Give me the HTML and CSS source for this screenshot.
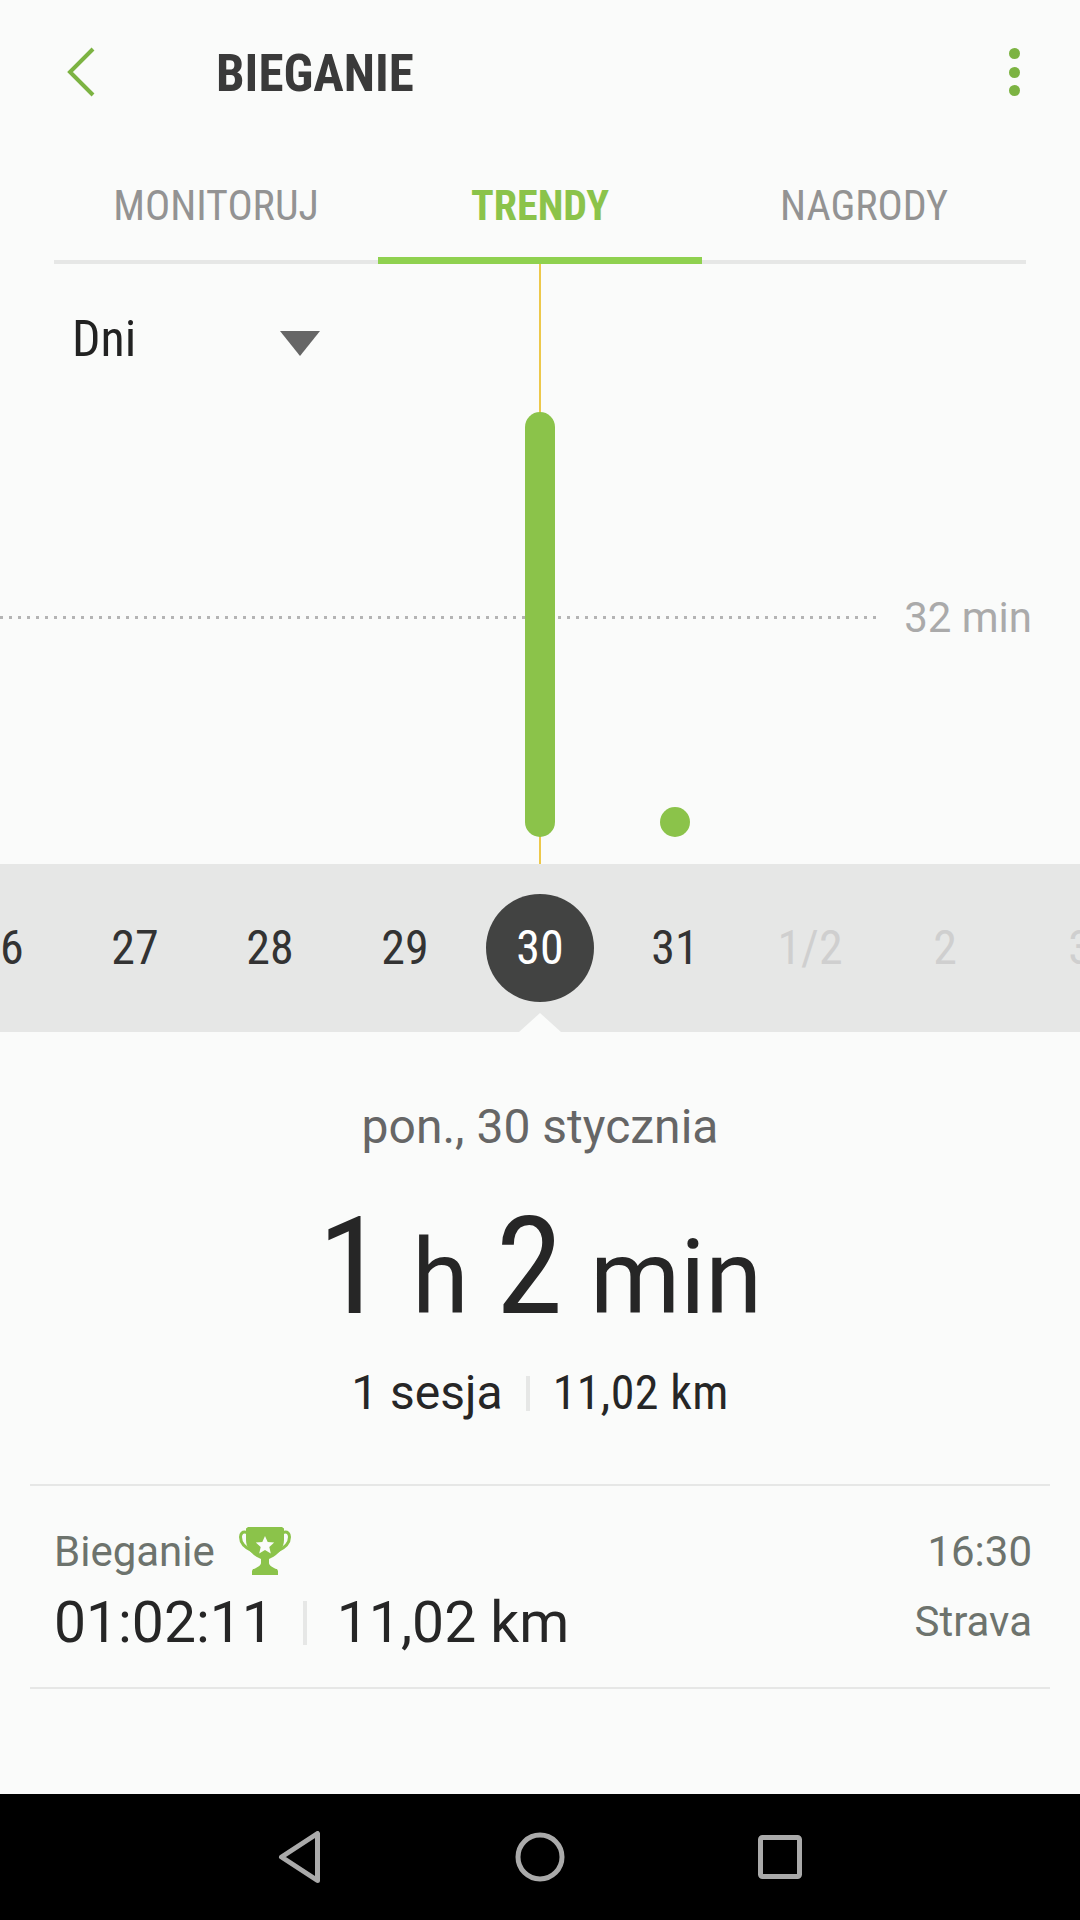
FILE: index.html
```html
<!DOCTYPE html>
<html lang="pl">
<head>
<meta charset="utf-8">
<title>Bieganie</title>
<link rel="stylesheet" href="styles.css">
</head>
<body>
<div class="app">
  <header class="header">
    <svg class="back" width="30" height="50" viewBox="0 0 30 50"><path d="M27 2 4 25l23 23" fill="none" stroke="#7cb342" stroke-width="4"/></svg>
    <h1 class="title">BIEGANIE</h1>
    <div class="more"><i></i><i></i><i></i></div>
  </header>
  <nav class="tabs">
    <div class="tab">MONITORUJ</div>
    <div class="tab active">TRENDY</div>
    <div class="tab">NAGRODY</div>
  </nav>
  <section class="chart">
    <div class="range"><span class="range-label">Dni</span><span class="caret"></span></div>
    <div class="cursor"></div>
    <div class="avg-line"></div>
    <div class="avg-label">32 min</div>
    <div class="bar"></div>
    <div class="dot"></div>
  </section>
  <section class="strip">
    <span class="day">26</span><span class="day">27</span><span class="day">28</span><span class="day">29</span>
    <span class="day selected"><b>30</b></span>
    <span class="day">31</span><span class="day off">1/2</span><span class="day off">2</span><span class="day off">3</span>
    <span class="notch"></span>
  </section>
  <section class="summary">
    <div class="date">pon., 30 stycznia</div>
    <div class="total"><span class="big">1</span><span class="unit">h</span><span class="big">2</span><span class="unit">min</span></div>
    <div class="meta"><span class="meta-count">1 sesja</span><i class="sep"></i><span class="meta-dist">11,02 km</span></div>
  </section>
  <section class="session">
    <div class="session-left">
      <div class="session-name">Bieganie
        <svg class="trophy" width="52" height="48" viewBox="0 0 52 48"><path d="M8 5.500C3 4 1.500 7 1.500 10c0 6 5 11 12 14M44 5.500C49 4 50.500 7 50.500 10c0 6-5 11-12 14" fill="none" stroke="#8bc34a" stroke-width="3"/><path d="M7 1.500 9 0h34l2 1.500V13c0 8-6 15-13 18l-2 1v4c0 2 3 4 5 5l2 1H15l2-1c2-1 5-3 5-5v-4l-2-1C13 28 7 21 7 13z" fill="#8bc34a"/><path d="M14 42h24l1 2v4H13v-4z" fill="#8bc34a"/><path d="m26 9 2.700 6 6.500.6-4.900 4.400 1.500 6.400-5.800-3.500-5.800 3.500 1.500-6.400-4.900-4.400 6.500-.6z" fill="#fafbfa"/></svg>
      </div>
      <div class="session-stats"><span>01:02:11</span><i class="sep tall"></i><span>11,02 km</span></div>
    </div>
    <div class="session-right">
      <div>16:30</div>
      <div>Strava</div>
    </div>
  </section>
  <div class="spacer"></div>
  <footer class="navbar">
    <svg width="44" height="52" viewBox="0 0 44 52"><path d="M3.500 26 39.500 2.500v47z" fill="none" stroke="#aaa" stroke-width="5" stroke-linejoin="round"/></svg>
    <svg width="50" height="50" viewBox="0 0 50 50"><circle cx="25" cy="25" r="22" fill="none" stroke="#aaa" stroke-width="5"/></svg>
    <svg width="46" height="46" viewBox="0 0 46 46"><rect x="3.500" y="3.500" width="39" height="39" rx="2" fill="none" stroke="#aaa" stroke-width="5"/></svg>
  </footer>
</div>
</body>
</html>
```

FILE: styles.css
```css
* { box-sizing: border-box; }
html, body { margin: 0; padding: 0; }
body { background: #fafbfa; font-family: Roboto, "Liberation Sans", sans-serif; }
.app { width: 1080px; height: 1920px; display: flex; flex-direction: column; overflow: hidden; }

.header { height: 144px; flex: none; display: flex; align-items: center; padding: 2px 60px 0 66px; }
.back { flex: none; margin-top: -2px; margin-right: 120px; }
.title { margin: 0; flex: 1; font-size: 51px; font-weight: 700; font-stretch: 75%; color: #3a3a3a; line-height: 1; }
.more { margin-top: -2px; display: flex; flex-direction: column; gap: 7.300px; }
.more i { display: block; width: 11px; height: 11px; border-radius: 50%; background: #7cb342; }

.tabs { flex: none; height: 120px; margin: 0 54px; display: grid; grid-template-columns: repeat(3, 324px); border-bottom: 4px solid #e6e7e6; }
.tab { display: flex; justify-content: center; padding-top: 37px; font-size: 42px; font-stretch: 75%; color: #939393; margin-bottom: -4px; line-height: 1.2; }
.tab.active { color: #8bc34a; font-weight: 700; border-bottom: 7px solid #8fd14f; }

.chart { flex: none; height: 600px; position: relative; }
.range { display: flex; align-items: center; padding: 45px 0 0 72px; }
.range-label { width: 208px; font-size: 50px; font-stretch: 75%; color: #222; line-height: 1.2; }
.caret { width: 0; height: 0; margin-top: 8px; border-left: 20px solid transparent; border-right: 20px solid transparent; border-top: 25px solid #666; }
.cursor { position: absolute; left: 539px; top: 0; bottom: 0; width: 2px; background: #edc84a; }
.avg-line { position: absolute; left: 0; top: 352px; width: 877px; height: 3px; background: linear-gradient(90deg, #b4b4b4 3px, transparent 3px) 0 0 / 9px 3px repeat-x; }
.avg-label { position: absolute; right: 48px; top: 329px; font-size: 42px; color: #aaa; line-height: 1.2; }
.bar { position: absolute; left: 525px; top: 148px; width: 30px; height: 425px; border-radius: 15px; background: #8bc34a; }
.dot { position: absolute; left: 660px; top: 543px; width: 30px; height: 30px; border-radius: 50%; background: #8bc34a; }

.strip { flex: none; height: 168px; position: relative; background: #e6e7e6; display: flex; justify-content: center; align-items: center; overflow: hidden; }
.day { flex: none; width: 135px; text-align: center; font-size: 48px; font-stretch: 75%; color: #333; line-height: 1; }
.day.off { color: #cfcfcf; }
.day.selected b { display: flex; align-items: center; justify-content: center; width: 108px; height: 108px; margin: 0 auto; border-radius: 50%; background: #424342; color: #fff; font-weight: 400; }
.notch { position: absolute; left: 519px; bottom: 0; width: 42px; height: 19px; background: #fafbfa; clip-path: polygon(0 100%, 50% 0, 100% 100%); }

.summary { flex: none; height: 452px; display: flex; flex-direction: column; align-items: center; }
.date { margin-top: 67px; font-size: 48px; color: #666; line-height: 56px; }
.total { margin-top: 52px; display: flex; align-items: baseline; gap: 27px; color: #262626; line-height: 120px; white-space: nowrap; }
.big { font-size: 136px; font-stretch: 75%; }
.unit { font-size: 103px; }
.meta { margin-top: 29px; display: flex; align-items: center; color: #262626; line-height: 52px; }
.meta-count { font-size: 48px; }
.meta-dist { font-size: 48px; font-stretch: 75%; letter-spacing: .4px; }
.sep { display: block; width: 4px; height: 35px; margin: 0 23px; background: #e6e7e6; }

.session { flex: none; height: 205px; margin: 0 30px; border-top: 2px solid #e6e7e6; border-bottom: 2px solid #e6e7e6; padding: 33px 18px 0 24px; display: flex; justify-content: space-between; }
.session-name { display: flex; align-items: center; gap: 24px; font-size: 42px; color: #6d736d; height: 64px; }
.session-stats { margin-top: 7px; display: flex; align-items: center; font-size: 57px; color: #262626; line-height: 66px; }
.sep.tall { height: 44px; margin: 0 30px 0 29px; }
.session-right { margin-top: -2px; text-align: right; font-size: 42px; color: #6d736d; line-height: 70px; }

.spacer { flex: 1; }
.navbar { flex: none; height: 126px; background: #000; display: grid; grid-template-columns: repeat(3, 240px); justify-content: center; justify-items: center; align-items: center; }
```
